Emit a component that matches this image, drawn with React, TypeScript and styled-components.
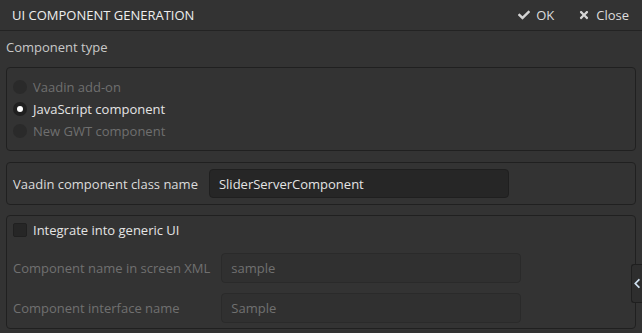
import React from 'react'
import styled, { createGlobalStyle } from 'styled-components'
import { FaCheck, FaTimes, FaChevronLeft } from 'react-icons/fa'

const GlobalStyle = createGlobalStyle`
  html, body {
    margin: 0;
    padding: 0;
    background: #333333;
    font-family: "Open Sans", "Liberation Sans", sans-serif;
    font-size: 13px;
    overflow: hidden;
  }
`

const Window = styled.div`
  position: relative;
  width: 642px;
  height: 333px;
  background: #333333;
`

const Header = styled.div`
  display: flex;
  align-items: center;
  justify-content: space-between;
  padding: 0 13px 0 12px;
  border-bottom: 1px solid #232323;
  box-sizing: border-box;
  height: 31px;
`

const Title = styled.div`
  color: #eeeeee;
  font-size: 13px;
`

const Actions = styled.div`
  display: flex;
  gap: 24px;
`

const Action = styled.div`
  display: flex;
  align-items: center;
  gap: 6px;
  color: #dddddd;
  svg {
    color: #d4d4d4;
    width: 12px;
    height: 12px;
  }
`

const Content = styled.div`
  padding: 6px 6px 0 6px;
  display: flex;
  flex-direction: column;
`

const Caption = styled.div`
  color: #c8c8c8;
  height: 20px;
  line-height: 20px;
  margin-bottom: 10px;
`

const Panel = styled.div<{ $pad: string; $mb: number }>`
  border: 1px solid #202020;
  border-radius: 4px;
  padding: ${p => p.$pad};
  margin-bottom: ${p => p.$mb}px;
  width: 630px;
  box-sizing: border-box;
`

const OptionRow = styled.div<{ $disabled?: boolean }>`
  height: 22px;
  display: flex;
  align-items: center;
  gap: 6px;
  color: ${p => (p.$disabled ? '#6f6f6f' : '#e4e4e4')};
`

const Radio = styled.span<{ $checked?: boolean }>`
  width: 14px;
  height: 14px;
  border-radius: 50%;
  background: ${p => (p.$checked ? '#1f1f1f' : '#2a2a2a')};
  display: flex;
  align-items: center;
  justify-content: center;
  &::after {
    content: '';
    display: ${p => (p.$checked ? 'block' : 'none')};
    width: 6px;
    height: 6px;
    border-radius: 50%;
    background: #ffffff;
  }
`

const Checkbox = styled.span`
  width: 14px;
  height: 14px;
  border-radius: 2px;
  background: #262626;
  border: 1px solid #202020;
  box-sizing: border-box;
`

const FieldGrid = styled.div`
  display: grid;
  grid-template-columns: auto 1fr;
  column-gap: 11px;
  row-gap: 10px;
  align-items: center;
`

const Label = styled.div<{ $disabled?: boolean }>`
  color: ${p => (p.$disabled ? '#707070' : '#dcdcdc')};
`

const Field = styled.div<{ $disabled?: boolean; $width: number }>`
  width: ${p => p.$width}px;
  height: ${p => (p.$disabled ? 30 : 29)}px;
  box-sizing: border-box;
  border-radius: 4px;
  border: 1px solid ${p => (p.$disabled ? '#2a2a2a' : '#1f1f1f')};
  background: ${p => (p.$disabled ? '#303030' : '#262626')};
  color: ${p => (p.$disabled ? '#707070' : '#e4e4e4')};
  padding: 0 9px;
  display: flex;
  align-items: center;
`

const CheckRow = styled(OptionRow)`
  margin-bottom: 12px;
`

const SideTab = styled.div`
  position: absolute;
  right: 0;
  top: 264px;
  width: 11px;
  height: 39px;
  background: #2e2e2e;
  border: 1px solid #1f1f1f;
  border-right: none;
  border-radius: 3px 0 0 3px;
  box-sizing: border-box;
  display: flex;
  align-items: center;
  justify-content: center;
  color: #cfe0f0;
  svg {
    width: 8px;
    height: 11px;
  }
`

const App: React.FC = () => {
  return (
    <Window>
      <GlobalStyle />
      <Header>
        <Title>UI COMPONENT GENERATION</Title>
        <Actions>
          <Action><FaCheck />OK</Action>
          <Action><FaTimes />Close</Action>
        </Actions>
      </Header>
      <Content>
        <Caption>Component type</Caption>
        <Panel $pad="8px 6px 8px 6px" $mb={11}>
          <OptionRow $disabled><Radio />Vaadin add-on</OptionRow>
          <OptionRow><Radio $checked />JavaScript component</OptionRow>
          <OptionRow $disabled><Radio />New GWT component</OptionRow>
        </Panel>
        <Panel $pad="6px 6px 6px 6px" $mb={10}>
          <FieldGrid>
            <Label>Vaadin component class name</Label>
            <Field $width={300}>SliderServerComponent</Field>
          </FieldGrid>
        </Panel>
        <Panel $pad="3px 6px 5px 6px" $mb={0}>
          <CheckRow><Checkbox />Integrate into generic UI</CheckRow>
          <FieldGrid>
            <Label $disabled>Component name in screen XML</Label>
            <Field $disabled $width={300}>sample</Field>
            <Label $disabled>Component interface name</Label>
            <Field $disabled $width={300}>Sample</Field>
          </FieldGrid>
        </Panel>
      </Content>
      <SideTab><FaChevronLeft /></SideTab>
    </Window>
  )
}

export default App
